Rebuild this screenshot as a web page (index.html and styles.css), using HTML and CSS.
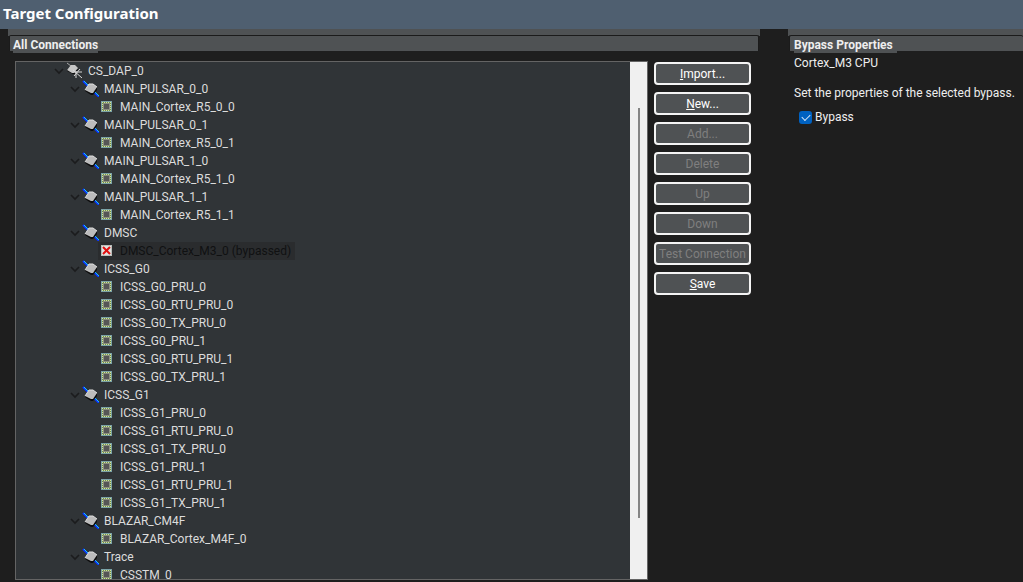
FILE: index.html
```
<!DOCTYPE html>
<html lang="en">
<head>
    <meta charset="UTF-8">
    <meta name="viewport" content="width=device-width, initial-scale=1.0">
    <title>Target Configuration</title>
    <link rel="stylesheet" href="styles.css">
</head>
<body>
    <!-- Shared icons -->
    <svg class="icon-defs" aria-hidden="true">
        <symbol id="arrow" viewBox="0 0 16 16">
            <path d="M5 7l4 4 4-4" fill="none" stroke="#1b1c1d" stroke-width="1.6"/>
        </symbol>
        <symbol id="dap" viewBox="0 0 16 16">
            <path d="M1 1l4 3" stroke="#a8a8a8" stroke-width="1"/>
            <path d="M1 7v2l6 3h2l3-5z" fill="#0c0c0c"/>
            <path d="M5 3h4l3 3-4 5H6L1 8z" fill="#c6c6c6"/>
            <path d="M7 8l9 8M8 10h8M10 9v7M14 7l-6 7" fill="none" stroke="#d8d8d8" stroke-width="1"/>
        </symbol>
        <symbol id="router" viewBox="0 0 17 17">
            <path d="M1 1l6 6M11 11l6 6" stroke="#0a35ff" stroke-width="2"/>
            <path d="M2 1l5 5M12 11l5 5" stroke="#18c8f5" stroke-width="1"/>
            <path d="M3 9v2l6 4h2l4-5V7z" fill="#0c0c0c"/>
            <path d="M7 4h4l4 3-4 6H9L3 10z" fill="#bcbcbc"/>
            <path d="M3 10l4-6h4l4 3" fill="none" stroke="#dedede" stroke-width="1"/>
        </symbol>
        <symbol id="cpu" viewBox="0 0 16 16">
            <path d="M3 3h11v11H3z" fill="#7ba3a8"/>
            <path d="M4 4h9v9H4z" fill="#6b9150"/>
            <path d="M4 4.500h9M4 12.500h9M4.500 4v9M12.500 4v9" stroke="#d6de9a" stroke-width="1" stroke-dasharray="1 1"/>
            <path d="M5 5h7v7H5z" fill="#8c8f80"/>
            <path d="M6 6h5v5H6z" fill="#565656"/>
        </symbol>
        <symbol id="bypassed" viewBox="0 0 16 16">
            <path d="M3 3h11v11H3z" fill="#b9bdb9"/>
            <path d="M4 4h9v9H4z" fill="#e2e2e0"/>
            <path d="M7 7h3v3H7z" fill="#c01818"/>
            <path d="M5 5l7 7M12 5l-7 7" stroke="#e01010" stroke-width="2"/>
        </symbol>
    </svg>

    <header class="title-bar">
        <h1>Target Configuration</h1>
    </header>

    <main class="editor">
        <section class="section connections">
            <h2 class="section-title"><span>All Connections</span></h2>
            <div class="section-body">
                <div class="tree-box">
                    <ul class="tree" id="tree"></ul>
                    <div class="scrollbar"><div class="thumb"></div></div>
                </div>
                <div class="buttons">
                    <button type="button"><u>I</u>mport...</button>
                    <button type="button"><u>N</u>ew...</button>
                    <button type="button" disabled>Add...</button>
                    <button type="button" disabled>Delete</button>
                    <button type="button" disabled>Up</button>
                    <button type="button" disabled>Down</button>
                    <button type="button" disabled>Test Connection</button>
                    <button type="button"><u>S</u>ave</button>
                </div>
            </div>
        </section>

        <section class="section properties">
            <h2 class="section-title"><span>Bypass Properties</span></h2>
            <div class="details">
                <p class="cpu-name">Cortex_M3 CPU</p>
                <p class="hint">Set the properties of the selected bypass.</p>
                <div class="check">
                    <input type="checkbox" id="bypass" checked>
                    <label for="bypass">Bypass</label>
                </div>
            </div>
        </section>
    </main>
    <script src="tree.js"></script>
</body>
</html>
```
FILE: styles.css
```
/* Page */
* {
    box-sizing: border-box;
}

body {
    display: flex;
    flex-direction: column;
    height: 100vh;
    margin: 0;
    overflow: hidden;
    background-color: #1e1e1e;
    color: #eee;
    font-family: Roboto, "Noto Sans", sans-serif;
    font-size: 12px;
    line-height: 18px;
}

h1, h2, p, ul {
    margin: 0;
    padding: 0;
}

.icon-defs {
    display: none;
}

.title-bar {
    flex: none;
    height: 29px;
    padding-left: 3px;
    background-color: #4f5f70;
}

h1 {
    color: #fff;
    font-family: "Noto Sans", sans-serif;
    font-size: 15px;
    line-height: 26px;
}

/* Sections */
.editor {
    flex: 1;
    display: grid;
    grid-template-columns: 1fr 235px;
    gap: 28px;
    min-height: 0;
    padding: 0 0 2px 8px;
}

.section {
    display: flex;
    flex-direction: column;
    min-width: 0;
    min-height: 0;
}

.section-title {
    flex: none;
    height: 21px;
    padding: 6px 1px 0;
    background: linear-gradient(#4f5254 7px, #1e1e1e 7px);
    font-size: 12px;
    line-height: 16px;
}

.section-title::before {
    content: "";
    display: block;
    height: 15px;
    margin-bottom: -15px;
    border: 1px solid #1b1b1b;
    border-bottom: 0;
    border-radius: 2px 2px 0 0;
    background-color: #4f5254;
}

.section-title span {
    position: relative;
    display: inline-block;
    margin: 1px 0 0 4px;
    background-color: #4f5254;
}

.properties .section-title {
    padding-right: 0;
}

.properties .section-title::before {
    border-right: 0;
}

.properties .section-title span {
    margin-left: 5px;
    padding-right: 4px;
}

.section-body {
    flex: 1;
    display: flex;
    gap: 6px;
    min-height: 0;
    padding: 11px 9px 0 7px;
}

/* Tree */
.tree-box {
    flex: 1;
    display: flex;
    overflow: hidden;
    border: 1px solid #646464;
    background-color: #303437;
}

.tree {
    flex: 1;
    list-style: none;
    color: #dcdcdc;
}

.tree li {
    display: flex;
    height: 18px;
    padding-left: 34px;
}

.tree li.level-1 {
    padding-left: 50px;
}

.tree li.level-2 {
    padding-left: 82px;
}

.tree svg {
    flex: none;
    width: 16px;
    height: 16px;
}

.tree .router {
    width: 17px;
    height: 17px;
    margin-right: -1px;
}

.item {
    display: flex;
}

.item span {
    padding: 0 4px 0 6px;
}

.selected .item {
    background-color: #2a2c2e;
    color: #101112;
}

.scrollbar {
    width: 17px;
    padding: 46px 6px 61px 8px;
    background-color: #f0f0f0;
}

.thumb {
    width: 2px;
    height: 100%;
    background-color: #858585;
}

/* Buttons */
.buttons {
    display: flex;
    flex-direction: column;
    gap: 7px;
    width: 97px;
    padding-top: 1px;
}

button {
    height: 23px;
    padding: 0;
    border: 2px solid #f4f4f4;
    border-radius: 4px;
    background-color: #4f5254;
    color: #fff;
    font: inherit;
    white-space: nowrap;
}

button:disabled {
    color: #7f7f7f;
}

/* Bypass properties */
.details {
    padding: 4px 0 0 6px;
    white-space: nowrap;
}

.hint {
    margin-top: 12px;
}

.check {
    display: flex;
    align-items: center;
    gap: 3px;
    margin-top: 6px;
    padding-left: 5px;
}

.check input {
    display: grid;
    place-items: center;
    width: 13px;
    height: 13px;
    margin: 0;
    appearance: none;
    border-radius: 3px;
    background-color: #0061c0;
}

.check input:checked::after {
    content: "";
    width: 7px;
    height: 4px;
    margin-top: -2px;
    border: solid #d6e6f6;
    border-width: 0 0 1px 1px;
    transform: rotate(-45deg);
}
```
FILE: tree.js
```
// Connections listed in display order: [level, icon, name]
const nodes = [
    [0, "dap", "CS_DAP_0"],
    [1, "router", "MAIN_PULSAR_0_0"],
    [2, "cpu", "MAIN_Cortex_R5_0_0"],
    [1, "router", "MAIN_PULSAR_0_1"],
    [2, "cpu", "MAIN_Cortex_R5_0_1"],
    [1, "router", "MAIN_PULSAR_1_0"],
    [2, "cpu", "MAIN_Cortex_R5_1_0"],
    [1, "router", "MAIN_PULSAR_1_1"],
    [2, "cpu", "MAIN_Cortex_R5_1_1"],
    [1, "router", "DMSC"],
    [2, "bypassed", "DMSC_Cortex_M3_0 (bypassed)"],
    [1, "router", "ICSS_G0"],
    [2, "cpu", "ICSS_G0_PRU_0"],
    [2, "cpu", "ICSS_G0_RTU_PRU_0"],
    [2, "cpu", "ICSS_G0_TX_PRU_0"],
    [2, "cpu", "ICSS_G0_PRU_1"],
    [2, "cpu", "ICSS_G0_RTU_PRU_1"],
    [2, "cpu", "ICSS_G0_TX_PRU_1"],
    [1, "router", "ICSS_G1"],
    [2, "cpu", "ICSS_G1_PRU_0"],
    [2, "cpu", "ICSS_G1_RTU_PRU_0"],
    [2, "cpu", "ICSS_G1_TX_PRU_0"],
    [2, "cpu", "ICSS_G1_PRU_1"],
    [2, "cpu", "ICSS_G1_RTU_PRU_1"],
    [2, "cpu", "ICSS_G1_TX_PRU_1"],
    [1, "router", "BLAZAR_CM4F"],
    [2, "cpu", "BLAZAR_Cortex_M4F_0"],
    [1, "router", "Trace"],
    [2, "cpu", "CSSTM_0"]
];

const icon = (id) => `<svg class="${id}" aria-hidden="true"><use href="#${id}"/></svg>`;

document.getElementById("tree").innerHTML = nodes.map(([level, type, name]) => {
    const arrow = level < 2 ? icon("arrow") : "";
    const selected = type === "bypassed" ? " selected" : "";
    return `<li class="level-${level}${selected}">${arrow}<div class="item">${icon(type)}<span>${name}</span></div></li>`;
}).join("");
```
